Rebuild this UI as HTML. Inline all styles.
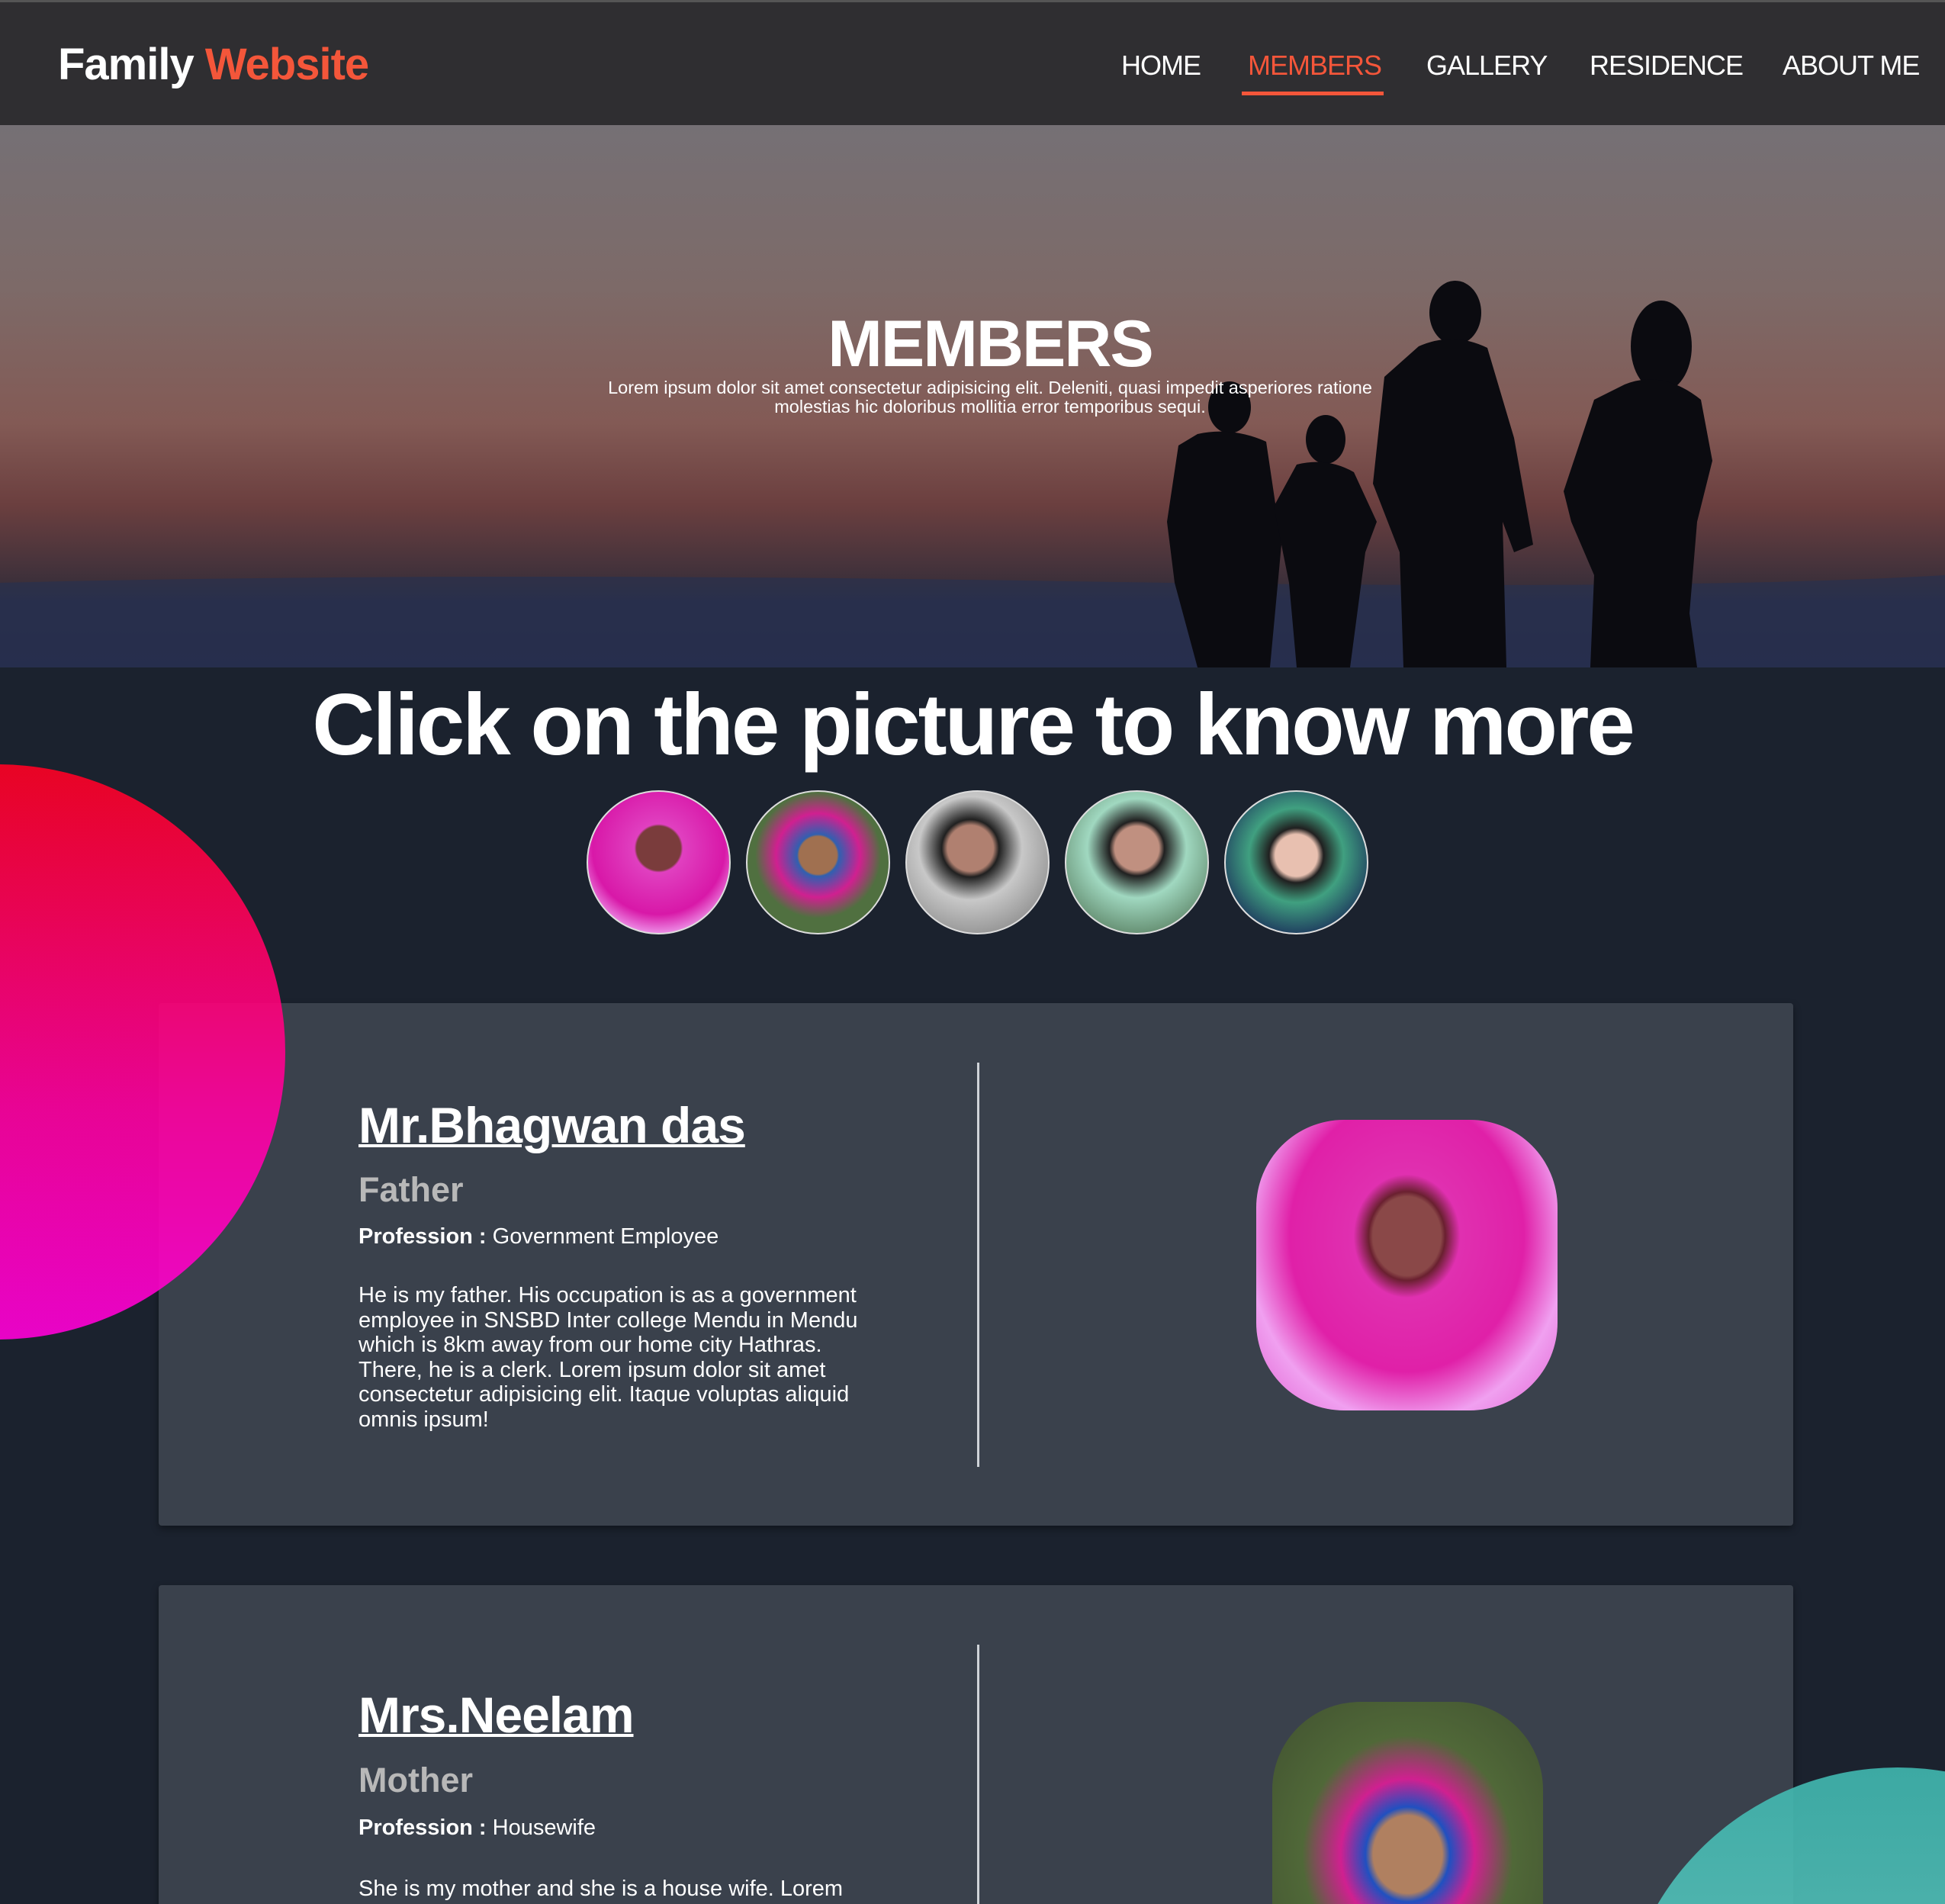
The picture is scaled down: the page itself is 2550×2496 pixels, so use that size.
<!DOCTYPE html>
<html><head><meta charset="utf-8"><style>
*{margin:0;padding:0;box-sizing:border-box}
html,body{width:2550px;height:2496px;overflow:hidden;background:#1b222e}
body{font-family:"Liberation Sans",sans-serif;color:#fff}
#wrap{position:relative;width:2550px;height:2496px;overflow:hidden;background:#1b222e}
nav{position:absolute;left:0;top:0;width:2550px;height:164px;background:#2f2e31;border-top:3px solid #555;z-index:2}
.logo{position:absolute;left:76px;top:48px;font-size:58px;font-weight:bold;letter-spacing:-1px}
.logo span{color:#f4563a}
.nav a{position:absolute;top:62px;font-size:36px;color:#fff;text-decoration:none;letter-spacing:-1px}
.hero{position:absolute;left:0;top:164px;width:2550px;height:711px;background:linear-gradient(#757075 0%,#7d6a68 30%,#835a55 55%,#6b3f3f 70%,#3a2f3a 85%,#2a2e48 88%,#24294a 100%);overflow:hidden}
.ht{position:absolute;left:0;width:2550px;text-align:center}
.bg-c1{position:absolute;left:-380px;top:1002px;width:754px;height:754px;border-radius:50%;background:linear-gradient(#ff0022,#ff00a0 60%,#ff00d8);z-index:3;opacity:.9}
.bg-c2{position:absolute;left:2122px;top:2317px;width:732px;height:732px;border-radius:50%;background:linear-gradient(#40b8b0,#80d8d0);z-index:3;opacity:.9}
.card{position:absolute;left:208px;width:2143px;height:685px;background:#3a414c;border-radius:4px;box-shadow:0 4px 10px rgba(0,0,0,.4)}
.div{position:absolute;left:1073px;top:78px;width:3px;height:530px;background:#cfd3d8}
.name{position:absolute;left:262px;font-size:66px;font-weight:bold;text-decoration:underline;text-decoration-thickness:4px;letter-spacing:-1px}
.role{position:absolute;left:262px;font-size:45px;font-weight:bold;color:#b8b8b8}
.prof{position:absolute;left:262px;font-size:29px}
.para{position:absolute;left:262px;width:680px;font-size:29px;line-height:32.5px}
.ph{position:absolute;border-radius:115px;overflow:hidden}
.circ{position:absolute;top:1036px;width:189px;height:189px;border-radius:50%;border:2px solid #ddd;overflow:hidden}
</style></head><body><div id="wrap">
<div class="bg-c1"></div>
<div class="bg-c2"></div>
<nav>
<div class="logo">Family <span>Website</span></div>
<div class="nav">
<a style="left:1470px">HOME</a>
<a style="left:1636px;color:#f4563a">MEMBERS</a>
<a style="left:1870px">GALLERY</a>
<a style="left:2084px">RESIDENCE</a>
<a style="left:2337px">ABOUT ME</a>
</div>
<div style="position:absolute;left:1628px;top:117px;width:186px;height:5px;background:#f4563a"></div>
</nav>
<div class="hero">
<svg width="2550" height="711" style="position:absolute;left:0;top:0">
<path d="M0 600 Q600 585 1400 598 T2550 590 V711 H0Z" fill="#28304f" opacity=".7"/>
<g fill="#0b0b10">
<ellipse cx="1908" cy="246" rx="34" ry="42"/>
<path d="M1860 290 Q1905 270 1950 292 L1985 410 L2010 550 L1985 560 L1970 520 L1975 711 H1840 L1835 560 L1800 470 L1815 330Z"/>
<ellipse cx="2178" cy="290" rx="40" ry="60"/>
<path d="M2130 340 Q2180 320 2230 360 L2245 440 L2225 520 L2215 640 L2225 711 H2085 L2090 590 L2060 520 L2050 480 L2090 360Z"/>
<ellipse cx="1612" cy="370" rx="28" ry="34"/>
<path d="M1570 405 Q1615 395 1660 415 L1680 550 L1665 711 H1570 L1540 600 L1530 520 L1545 420Z"/>
<ellipse cx="1738" cy="412" rx="26" ry="32"/>
<path d="M1700 445 Q1740 435 1775 455 L1805 520 L1790 560 L1770 711 H1700 L1690 600 L1670 500Z"/>
</g>
</svg>
<div class="ht" style="top:238px;left:23px;font-size:86px;font-weight:bold;letter-spacing:-2px">MEMBERS</div>
<div class="ht" style="top:332px;left:23px;font-size:23.5px;line-height:25px">Lorem ipsum dolor sit amet consectetur adipisicing elit. Deleniti, quasi impedit asperiores ratione<br>molestias hic doloribus mollitia error temporibus sequi.</div>
</div>
<div class="ht" style="top:885px;font-size:114px;font-weight:bold;letter-spacing:-3px">Click on the picture to know more</div>
<div class="circ" style="left:769px;background:radial-gradient(circle at 50% 40%,#7a3c3c 0 20%,#e040c0 22%,#d818a8 60%,#f0a0f0 80%)"></div>
<div class="circ" style="left:978px;background:radial-gradient(circle at 50% 45%,#a07050 0 18%,#3060b0 20%,#d02090 40%,#507040 60%)"></div>
<div class="circ" style="left:1187px;background:radial-gradient(circle at 45% 40%,#b08070 0 20%,#202020 25%,#c8c8c8 45%,#707070)"></div>
<div class="circ" style="left:1396px;background:radial-gradient(circle at 50% 40%,#c09080 0 20%,#202020 25%,#a0d8c0 45%,#406040)"></div>
<div class="circ" style="left:1605px;background:radial-gradient(circle at 50% 45%,#e8c0b0 0 20%,#202020 26%,#40a080 45%,#204060 75%)"></div>
<div class="card" style="top:1315px">
<div class="div"></div>
<div class="name" style="top:122px">Mr.Bhagwan das</div>
<div class="role" style="top:219px">Father</div>
<div class="prof" style="top:290px"><b>Profession :</b> Government Employee</div>
<div class="para" style="top:367px">He is my father. His occupation is as a government employee in SNSBD Inter college Mendu in Mendu which is 8km away from our home city Hathras. There, he is a clerk. Lorem ipsum dolor sit amet consectetur adipisicing elit. Itaque voluptas aliquid omnis ipsum!</div>
<div class="ph" style="left:1439px;top:153px;width:395px;height:381px;background:radial-gradient(ellipse at 50% 40%,#8a4848 0 16%,#6a2030 18%,#e030b0 25%,#e020a8 55%,#f0a0f0 75%,#e060d0)"></div>
</div>
<div class="card" style="top:2078px">
<div class="div"></div>
<div class="name" style="top:132px">Mrs.Neelam</div>
<div class="role" style="top:230px">Mother</div>
<div class="prof" style="top:302px"><b>Profession :</b> Housewife</div>
<div class="para" style="top:382px">She is my mother and she is a house wife. Lorem</div>
<div class="ph" style="left:1460px;top:153px;width:355px;height:400px;background:radial-gradient(ellipse at 50% 50%,#b08060 0 18%,#2050c0 22%,#d02090 35%,#506838 55%,#405030)"></div>
</div>
</div></body></html>
